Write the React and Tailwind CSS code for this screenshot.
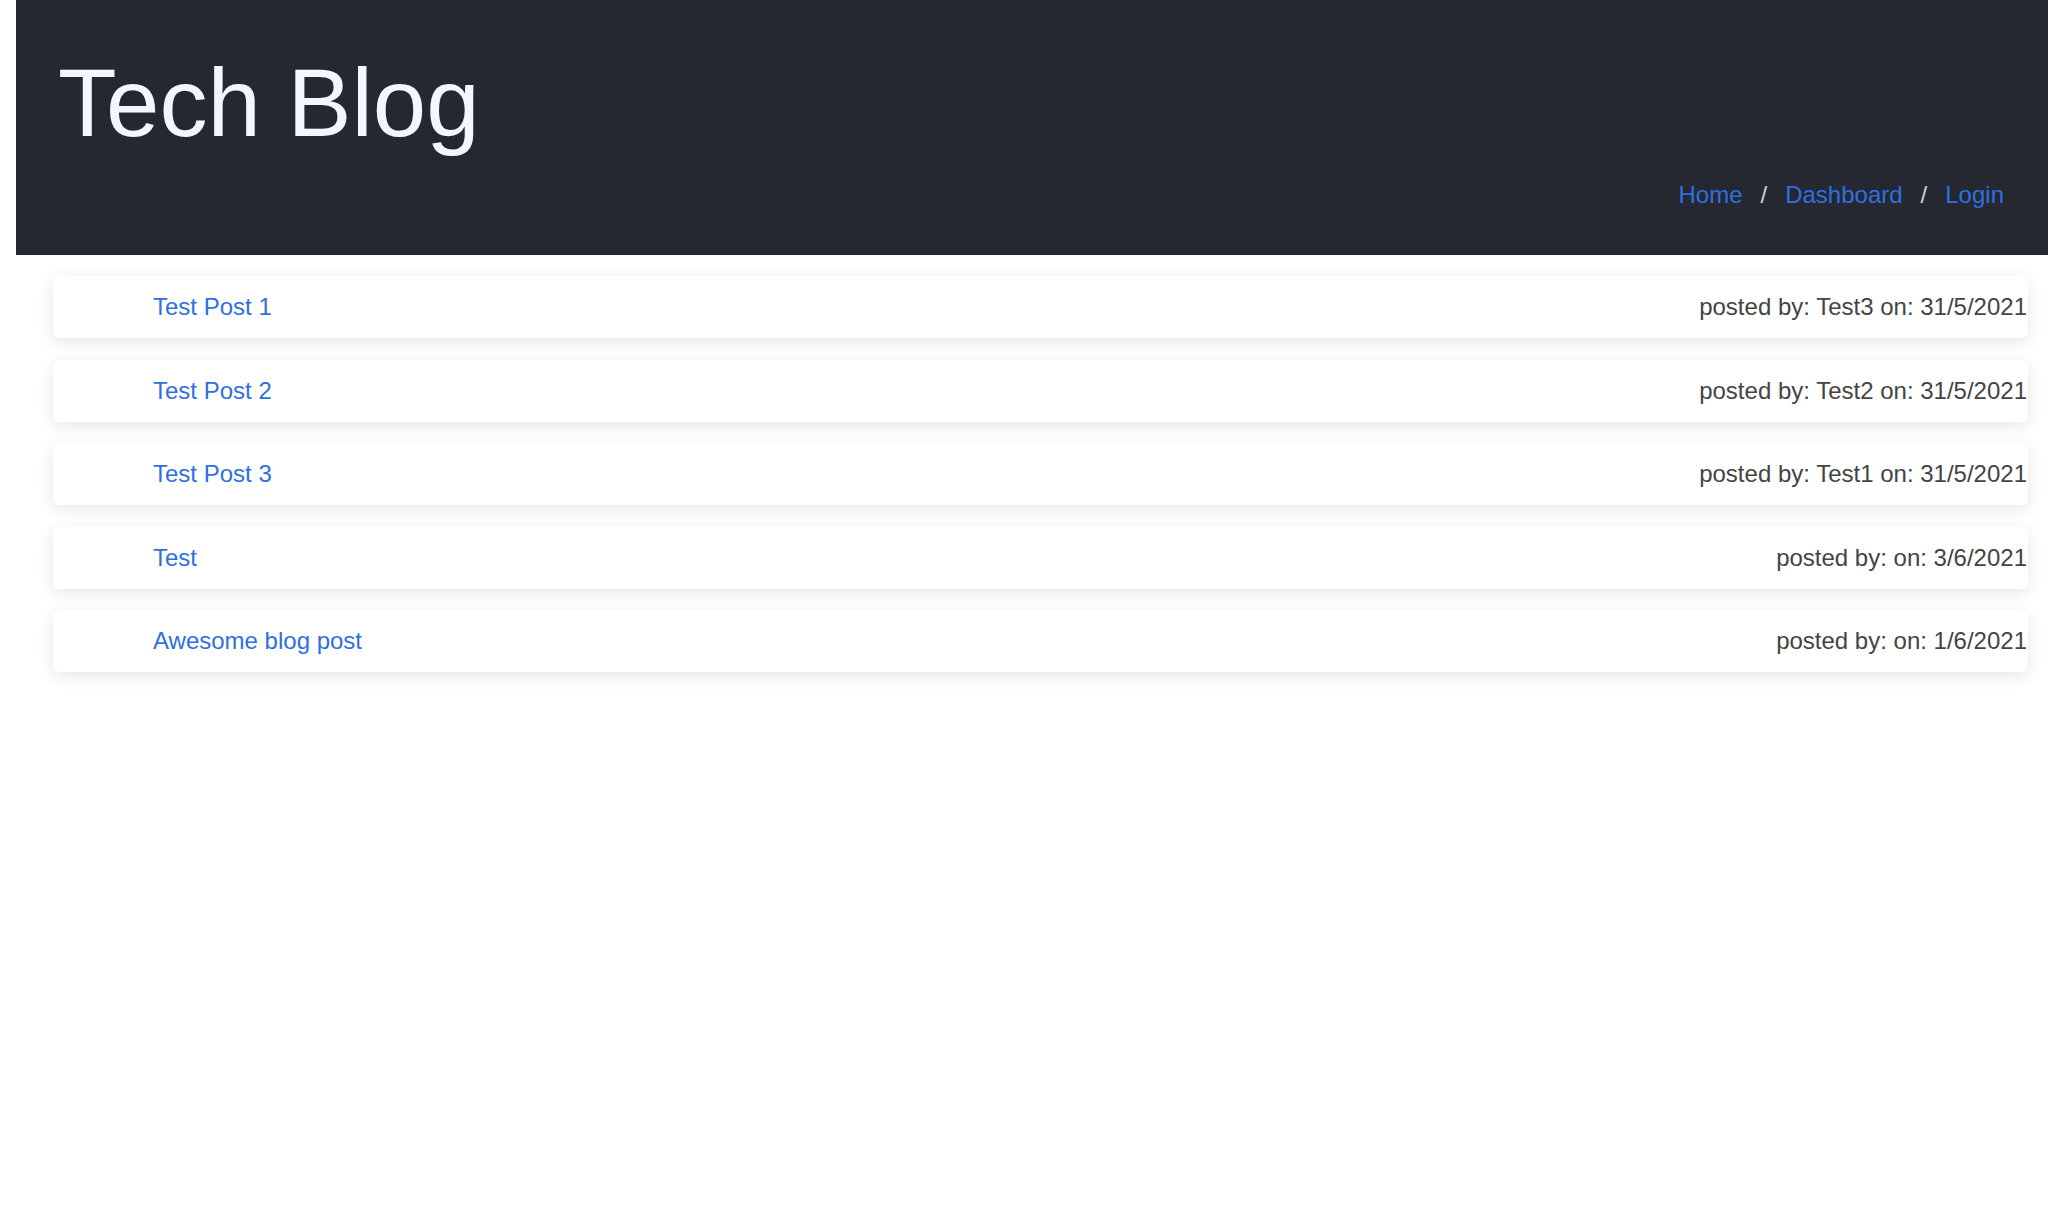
import React from 'react';

const posts = [
  { id: 1, title: 'Test Post 1', author: 'Test3', date: '31/5/2021' },
  { id: 2, title: 'Test Post 2', author: 'Test2', date: '31/5/2021' },
  { id: 3, title: 'Test Post 3', author: 'Test1', date: '31/5/2021' },
  { id: 4, title: 'Test', author: '', date: '3/6/2021' },
  { id: 5, title: 'Awesome blog post', author: '', date: '1/6/2021' },
];

function Header() {
  const links = ['Home', 'Dashboard', 'Login'];
  return (
    <header className="bg-[#252831] pl-[42px] pr-[44px] pt-[55px] pb-[48px]">
      <h1 className="text-[96px] leading-none text-[#f0f7ff]">Tech Blog</h1>
      <nav className="mt-[32px] flex justify-end text-[24px] leading-none">
        {links.map((link, i) => (
          <React.Fragment key={link}>
            {i > 0 && <span className="mx-[18px] text-[#d6d0c8]">/</span>}
            <a href="#" className="text-[#2f6fe0]">{link}</a>
          </React.Fragment>
        ))}
      </nav>
    </header>
  );
}

function PostCard({ post }) {
  return (
    <div className="h-[62px] flex items-center justify-between bg-white rounded-md shadow-[0_4px_16px_rgba(0,0,0,0.1)] pl-[100px] pr-[1px]">
      <a href="#" className="text-[24px] text-[#2f6fe0]">{post.title}</a>
      <span className="text-[24px] text-[#444444]">
        posted by: {post.author ? `${post.author} ` : ''}on: {post.date}
      </span>
    </div>
  );
}

export default function App() {
  return (
    <div
      className="min-h-screen bg-white pl-[16px]"
      style={{ fontFamily: '"Liberation Sans", Arial, sans-serif' }}
    >
      <Header />
      <main className="pl-[37px] pr-[20px] pt-[21px] flex flex-col gap-[21.5px]">
        {posts.map((post) => (
          <PostCard key={post.id} post={post} />
        ))}
      </main>
    </div>
  );
}
